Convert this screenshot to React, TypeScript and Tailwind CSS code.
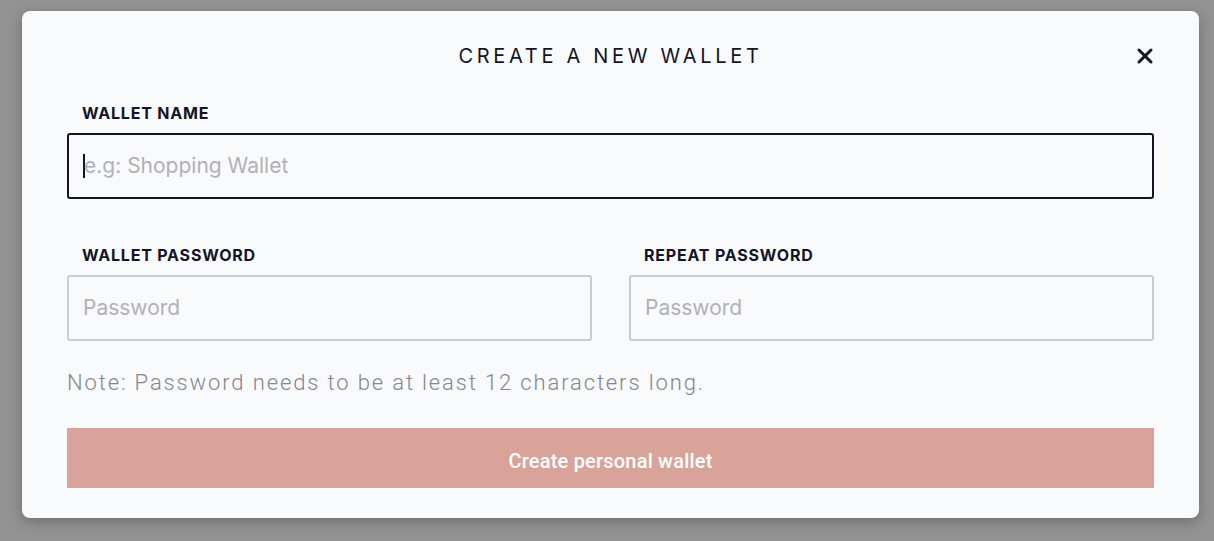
import { X } from 'lucide-react';

function Field({ label, placeholder, active }: { label: string; placeholder: string; active?: boolean }) {
  return (
    <div className="flex flex-col">
      <label className="pl-[15px] mt-[1px] mb-[10px] text-[16px] leading-[20px] font-bold tracking-[0.05em] text-[#141428] uppercase">
        {label}
      </label>
      <div
        className={`h-[66px] rounded-[3px] border-2 flex items-center px-[14px] bg-[#f9fafc] ${
          active ? 'border-[#141428]' : 'border-[#c6cbd6]'
        }`}
      >
        {active && <span className="w-[2px] h-[24px] bg-[#141428] -mr-[1px]" />}
        <input
          className="flex-1 bg-transparent outline-none text-[21px] text-[#141428] placeholder:text-[#b1b0b8]"
          style={{ fontFamily: 'Inter, sans-serif' }}
          placeholder={placeholder}
        />
      </div>
    </div>
  );
}

export default function App() {
  return (
    <div className="w-[1214px] h-[541px] bg-[#939393] pt-[11px] pl-[22px]" style={{ fontFamily: 'Inter, sans-serif' }}>
      <div className="w-[1177px] h-[507px] bg-[#f9fafc] rounded-[8px] shadow-[0_4px_14px_rgba(0,0,0,0.25)] px-[45px] pt-[21px]">
        {/* Header */}
        <div className="relative flex justify-center items-center h-[48px]">
          <h1 className="text-[20px] tracking-[0.185em] text-[#141428] font-normal">CREATE A NEW WALLET</h1>
          <button className="absolute right-[-3px] top-[12px] text-[#141428]">
            <X className="w-[24px] h-[24px]" strokeWidth={3} />
          </button>
        </div>

        <div className="mt-[22px]">
          <Field label="Wallet Name" placeholder="e.g: Shopping Wallet" active />
        </div>

        <div className="grid grid-cols-2 gap-[37px] mt-[45px]">
          <Field label="Wallet Password" placeholder="Password" />
          <Field label="Repeat Password" placeholder="Password" />
        </div>

        <p
          className="mt-[28px] text-[22px] leading-[28px] tracking-[0.085em] text-[#868590] font-light"
          style={{ fontFamily: 'Roboto, sans-serif' }}
        >
          Note: Password needs to be at least 12 characters long.
        </p>

        <button
          className="mt-[31px] w-full h-[60px] pt-[5px] bg-[#d9a39a] text-white text-[20px] font-medium tracking-[0.01em]"
          style={{ fontFamily: 'Roboto, sans-serif' }}
        >
          Create personal wallet
        </button>
      </div>
    </div>
  );
}
